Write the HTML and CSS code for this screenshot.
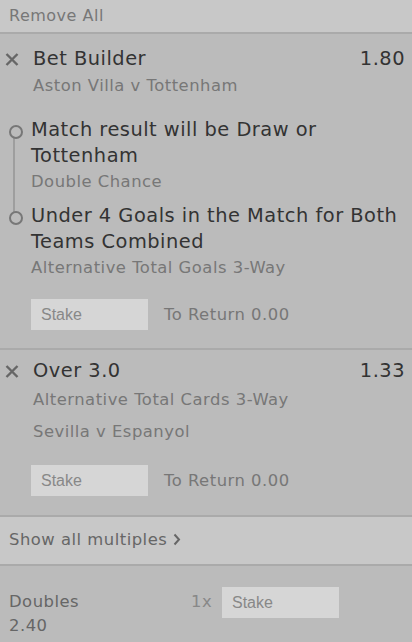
FILE: index.html
```html
<!DOCTYPE html>
<html lang="en">

<head>
    <meta charset="UTF-8">
    <title>Bet Slip</title>
    <link rel="stylesheet" href="styles.css">
</head>

<body>
    <div class="slip">
        <div class="remove_all">Remove All</div>

        <div class="bet bet_builder">
            <div class="bet_head">
                <span class="close">
                    <svg width="14" height="13" viewBox="0 0 14 13">
                        <path d="M1.5 1 L12.5 12 M12.5 1 L1.5 12" stroke="#666" stroke-width="2.4" fill="none" />
                    </svg>
                </span>
                <div class="bet_title">Bet Builder</div>
                <div class="odds">1.80</div>
            </div>
            <div class="bet_sub first_sub">Aston Villa v Tottenham</div>
            <ul class="legs">
                <li>
                    <div class="leg_title">Match result will be Draw or Tottenham</div>
                    <div class="leg_sub">Double Chance</div>
                </li>
                <li>
                    <div class="leg_title">Under 4 Goals in the Match for Both Teams Combined</div>
                    <div class="leg_sub">Alternative Total Goals 3-Way</div>
                </li>
            </ul>
            <div class="stake_row">
                <input type="text" class="stake" placeholder="Stake">
                <span class="to_return">To Return 0.00</span>
            </div>
        </div>

        <div class="bet bet_single">
            <div class="bet_head">
                <span class="close">
                    <svg width="14" height="13" viewBox="0 0 14 13">
                        <path d="M1.5 1 L12.5 12 M12.5 1 L1.5 12" stroke="#666" stroke-width="2.4" fill="none" />
                    </svg>
                </span>
                <div class="bet_title">Over 3.0</div>
                <div class="odds">1.33</div>
            </div>
            <div class="bet_sub market">Alternative Total Cards 3-Way</div>
            <div class="bet_sub fixture">Sevilla v Espanyol</div>
            <div class="stake_row">
                <input type="text" class="stake" placeholder="Stake">
                <span class="to_return">To Return 0.00</span>
            </div>
        </div>

        <div class="show_multiples">
            Show all multiples
            <svg width="8" height="13" viewBox="0 0 8 13">
                <path d="M1.5 1.5 L6 6.5 L1.5 11.5" stroke="#666" stroke-width="2" fill="none" />
            </svg>
        </div>

        <div class="multiple">
            <div class="multiple_info">
                <div class="multiple_name">Doubles</div>
                <div class="multiple_odds">2.40</div>
            </div>
            <span class="count">1x</span>
            <input type="text" class="stake" placeholder="Stake">
        </div>
    </div>
</body>

</html>
```

FILE: styles.css
```css
* {
    padding: 0;
    margin: 0;
    list-style: none;
    box-sizing: border-box;
}

body {
    background-color: #bbbbbb;
    font-family: "DejaVu Sans", Verdana, sans-serif;
    font-size: 16.4px;
    letter-spacing: 0.5px;
    color: #777;
}

.slip {
    width: 412px;
}

.remove_all {
    height: 34px;
    line-height: 32px;
    padding: 0 9px;
    background-color: #c8c8c8;
    border-bottom: 2px solid #aaaaaa;
    color: #777;
    font-size: 16px;
}

.bet {
    border-bottom: 2px solid #aaaaaa;
    padding: 12px 7px 18px 0;
}

.bet_single {
    padding-top: 8px;
    padding-bottom: 19px;
}

.bet_head {
    display: flex;
    align-items: center;
    height: 26px;
}

.close {
    width: 33px;
    display: flex;
    justify-content: center;
    padding-right: 9px;
    padding-top: 1px;
}

.bet_title {
    flex: 1;
    font-size: 19.4px;
    line-height: 26px;
    color: #333;
}

.odds {
    font-size: 19.4px;
    line-height: 26px;
    color: #333;
}

.bet_sub {
    padding-left: 33px;
    line-height: 24px;
    color: #777;
}

.first_sub {
    margin-top: 2px;
}

.market {
    margin-top: 4px;
}

.fixture {
    margin-top: 8px;
}

/* 腿之间的竖线 */
.legs {
    position: relative;
    margin-top: 19px;
}

.legs::before {
    content: "";
    position: absolute;
    left: 13px;
    top: 13px;
    height: 84px;
    width: 2px;
    background-color: #9e9e9e;
}

.legs li {
    position: relative;
    padding-left: 31px;
}

.legs li + li {
    margin-top: 9px;
}

.legs li::before {
    content: "";
    position: absolute;
    left: 9px;
    top: 8px;
    width: 10px;
    height: 10px;
    border: 2px solid #777;
    border-radius: 50%;
    background-color: #bbbbbb;
}

.leg_title {
    font-size: 19.4px;
    line-height: 26px;
    color: #333;
}

.leg_sub {
    margin-top: 1px;
    line-height: 24px;
    color: #777;
}

.stake_row {
    display: flex;
    align-items: center;
    margin-top: 19px;
    padding-left: 31px;
}

.bet_single .stake_row {
    margin-top: 21px;
}

.stake {
    width: 117px;
    height: 31px;
    border: none;
    outline: none;
    background-color: #d6d6d6;
    padding-left: 10px;
    font-family: "Liberation Sans", Arial, sans-serif;
    font-size: 16px;
    color: #333;
}

.stake::placeholder {
    color: #888;
}

.to_return {
    margin-left: 16px;
    color: #777;
}

.show_multiples {
    display: flex;
    align-items: center;
    gap: 6px;
    height: 49px;
    padding: 0 9px 3px;
    background-color: #c8c8c8;
    border-bottom: 2px solid #aaaaaa;
    color: #666;
}

.multiple {
    display: flex;
    align-items: flex-start;
    padding: 21px 0 0 9px;
}

.multiple_info {
    width: 182px;
    margin-top: 3px;
    line-height: 24px;
    color: #666;
}

.count {
    margin-top: 3px;
    width: 31px;
    line-height: 24px;
    color: #888;
}
```
